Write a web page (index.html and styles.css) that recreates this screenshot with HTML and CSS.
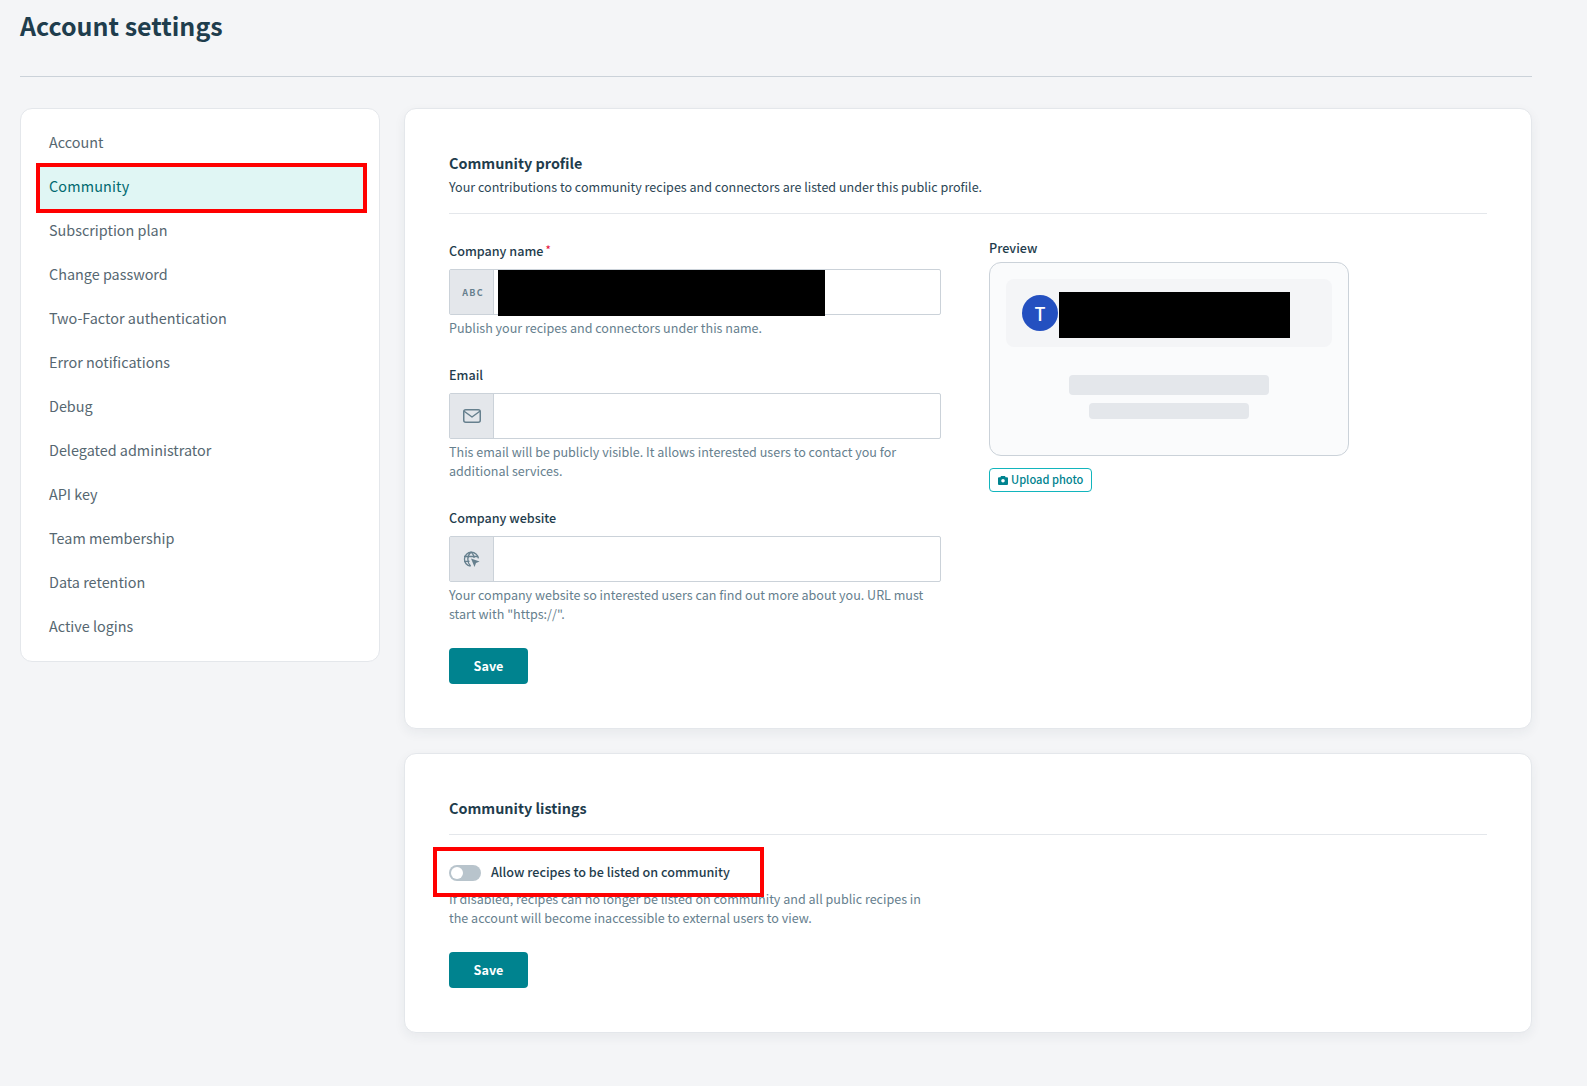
FILE: index.html
```html
<!DOCTYPE html>
<html lang="en">
<head>
<meta charset="utf-8">
<title>Account settings</title>
<link rel="stylesheet" href="styles.css">
</head>
<body>
<header class="page-head">
  <h1 class="page-title">Account settings</h1>
</header>
<div class="layout">
  <nav class="side-card">
    <a class="nav-item">Account</a>
    <a class="nav-item active">Community<span class="mark mark-nav"></span></a>
    <a class="nav-item">Subscription plan</a>
    <a class="nav-item">Change password</a>
    <a class="nav-item">Two-Factor authentication</a>
    <a class="nav-item">Error notifications</a>
    <a class="nav-item">Debug</a>
    <a class="nav-item">Delegated administrator</a>
    <a class="nav-item">API key</a>
    <a class="nav-item">Team membership</a>
    <a class="nav-item">Data retention</a>
    <a class="nav-item">Active logins</a>
  </nav>
  <main class="content">
    <section class="card">
      <div class="card-head">
        <h2 class="card-title">Community profile</h2>
        <p class="card-sub">Your contributions to community recipes and connectors are listed under this public profile.</p>
      </div>
      <div class="profile-grid">
        <form class="form-col">
          <div class="field">
            <div class="label">Company name<span class="req">*</span></div>
            <div class="input-group">
              <span class="addon addon-abc">ABC</span>
              <span class="input"><span class="redact redact-input"></span></span>
            </div>
            <p class="hint">Publish your recipes and connectors under this name.</p>
          </div>
          <div class="field">
            <div class="label">Email</div>
            <div class="input-group">
              <span class="addon">
                <svg class="icon" width="18" height="14" viewBox="0 0 18 14" fill="none" stroke="#66808e" stroke-width="1.5" stroke-linejoin="round" stroke-linecap="round"><rect x="0.75" y="0.75" width="16.5" height="12.5" rx="2"/><path d="M1.5 2.5 9 8l7.5-5.5"/></svg>
              </span>
              <span class="input"></span>
            </div>
            <p class="hint">This email will be publicly visible. It allows interested users to contact you for additional services.</p>
          </div>
          <div class="field">
            <div class="label">Company website</div>
            <div class="input-group">
              <span class="addon">
                <svg class="icon" width="17" height="17" viewBox="0 0 17 17" fill="none" stroke="#66808e" stroke-width="1.3"><path d="M7.5 15.2A7 7 0 1 1 15.4 7.4"/><path d="M1 5.5h14M1 10.3h5.5"/><path d="M8 .9C5.6 3 4.8 5.5 4.8 8s.8 5 2.7 7"/><path d="M8 .9c2 2 3 4 3.2 6"/><path d="M8 7.5l8.6 3-3.6 1.6-1.5 3.900z" fill="#66808e" stroke="none"/></svg>
              </span>
              <span class="input"></span>
            </div>
            <p class="hint">Your company website so interested users can find out more about you. URL must start with "https://".</p>
          </div>
          <button class="btn" type="button">Save</button>
        </form>
        <aside class="preview-col">
          <div class="label">Preview</div>
          <div class="preview">
            <div class="preview-band">
              <span class="avatar">T</span>
              <span class="redact redact-name"></span>
            </div>
            <div class="bar bar-lg"></div>
            <div class="bar bar-sm"></div>
          </div>
          <button class="btn-outline" type="button">
            <svg class="cam" width="10" height="9" viewBox="0 0 10 9"><path fill="#00838f" fill-rule="evenodd" d="M3 0h4l.6 1.200H9a1 1 0 0 1 1 1V8a1 1 0 0 1-1 1H1a1 1 0 0 1-1-1V2.200a1 1 0 0 1 1-1h1.400zM5 3a1.800 1.800 0 1 0 0 3.600 1.800 1.800 0 0 0 0-3.600z"/></svg>
            <span class="btn-outline-text">Upload photo</span>
          </button>
        </aside>
      </div>
    </section>
    <section class="card">
      <div class="card-head card-head-plain">
        <h2 class="card-title">Community listings</h2>
      </div>
      <div class="toggle-row">
        <span class="toggle"><span class="knob"></span></span>
        <span class="toggle-label">Allow recipes to be listed on community</span>
        <span class="mark mark-toggle"></span>
      </div>
      <p class="hint hint-wide">If disabled, recipes can no longer be listed on community and all public recipes in the account will become inaccessible to external users to view.</p>
      <button class="btn" type="button">Save</button>
    </section>
  </main>
</div>
</body>
</html>
```

FILE: styles.css
```css
* { box-sizing: border-box; }
html, body { margin: 0; padding: 0; }
body {
  background: #f4f5f7;
  font-family: "Noto Sans CJK SC", "Noto Sans", sans-serif;
  color: #1e3a4a;
  height: 1086px;
  overflow: hidden;
  padding: 0 55px 0 20px;
}
p, h1, h2 { margin: 0; }

.page-head {
  height: 77px;
  border-bottom: 1px solid #cbd2d9;
  padding-top: 7px;
}
.page-title { font-size: 25px; line-height: 36px; font-weight: 700; color: #1f3d4d; }

.layout { display: flex; gap: 24px; align-items: flex-start; margin-top: 31px; }

.side-card {
  width: 360px;
  flex: none;
  background: #fff;
  border: 1px solid #e4e7eb;
  border-radius: 12px;
  padding: 12px 16px;
}
.nav-item {
  display: block;
  position: relative;
  height: 44px;
  line-height: 42px;
  padding-left: 12px;
  font-size: 14.400px;
  color: #566771;
}
.nav-item.active { background: #e0f6f4; color: #00696f; letter-spacing: 0.15px; }

.mark { position: absolute; border: 4px solid #ff0000; }
.mark-nav { left: -1px; right: -4px; top: -2px; bottom: -4px; }
.mark-toggle { left: -16px; top: -16px; width: 331px; height: 50px; }

.content { flex: 1; min-width: 0; display: flex; flex-direction: column; gap: 24px; }
.card {
  background: #fff;
  border: 1px solid #e4e7eb;
  border-radius: 12px;
  padding: 44px;
  box-shadow: 0 4px 12px rgba(30, 50, 70, 0.06);
}
.card-head { border-bottom: 1px solid #e4e7eb; padding-bottom: 16px; }
.card-head-plain { padding-bottom: 14px; }
.card-title { font-size: 14.400px; line-height: 20px; margin-bottom: 2px; font-weight: 700; color: #1f3d4d; }
.card-sub { font-size: 12.550px; line-height: 20px; margin-top: 4px; color: #2c4655; }

.profile-grid { display: flex; gap: 48px; margin-top: 24px; }
.form-col { width: 492px; flex: none; padding-top: 1px; }
.field { margin-bottom: 28px; }
.field:last-of-type { margin-bottom: 25px; }
.label { font-size: 12.600px; line-height: 20px; font-weight: 500; color: #1f3d4d; margin-bottom: 8px; }
.req { color: #e5173f; margin-left: 2px; font-size: 11px; vertical-align: 2px; }
.input-group { display: flex; height: 46px; border: 1px solid #cbd2d9; border-radius: 2px; background: #fff; }
.addon {
  width: 44px;
  flex: none;
  display: flex;
  align-items: center;
  justify-content: center;
  background: #e4e7eb;
  border-right: 1px solid #cbd2d9;
}
.addon-abc { font-size: 9px; font-weight: 700; letter-spacing: 1.300px; color: #66808e; padding-left: 3px; }
.input { flex: 1; position: relative; }
.redact { background: #000; display: block; }
.redact-input { position: absolute; left: 4px; top: 0; width: 327px; height: 46px; }
.hint { font-size: 12.550px; line-height: 19px; color: #66808e; margin-top: 3px; }
.hint-wide { width: 492px; margin-top: 6px; margin-bottom: 25px; }

.btn {
  display: block;
  width: 79px;
  height: 36px;
  border: 0;
  border-radius: 4px;
  background: #00838f;
  color: #fff;
  font: 700 12.600px/36px "Noto Sans CJK SC", "Noto Sans", sans-serif;
  padding: 0;
}

.preview-col { width: 360px; flex: none; }
.preview-col .label { margin-bottom: 4px; }
.preview {
  height: 194px;
  background: #fafbfc;
  border: 1px solid #cbd2d9;
  border-radius: 12px;
  padding: 16px;
}
.preview-band {
  height: 68px;
  background: #f4f5f7;
  border-radius: 8px;
  padding: 16px;
  display: flex;
  position: relative;
}
.avatar {
  width: 36px;
  height: 36px;
  border-radius: 50%;
  background: #2450c0;
  color: #fff;
  font-size: 18px;
  font-weight: 500;
  line-height: 36px;
  text-align: center;
}
.redact-name { position: absolute; left: 53px; top: 13px; width: 231px; height: 46px; }
.bar { background: #e4e7eb; border-radius: 4px; margin: 0 auto; }
.bar-lg { width: 200px; height: 20px; margin-top: 28px; }
.bar-sm { width: 160px; height: 16px; margin-top: 8px; }
.btn-outline {
  display: flex;
  align-items: center;
  gap: 3px;
  width: 103px;
  height: 24px;
  margin-top: 12px;
  padding: 0 8px;
  background: #fff;
  border: 1px solid #12b5bd;
  border-radius: 4px;
  color: #00838f;
  font: 500 11.100px/20px "Noto Sans CJK SC", "Noto Sans", sans-serif;
  white-space: nowrap;
}
.btn-outline-text { margin-bottom: 2px; }
.cam { flex: none; }

.toggle-row { position: relative; display: flex; align-items: center; gap: 10px; height: 20px; margin-top: 28px; }
.toggle { width: 32px; height: 16px; border-radius: 8px; background: #b8c4cc; padding: 2px; display: block; }
.knob { display: block; width: 12px; height: 12px; border-radius: 50%; background: #fff; }
.toggle-label { font-size: 12.600px; line-height: 20px; font-weight: 500; color: #1f3d4d; margin-bottom: 2px; }
```
